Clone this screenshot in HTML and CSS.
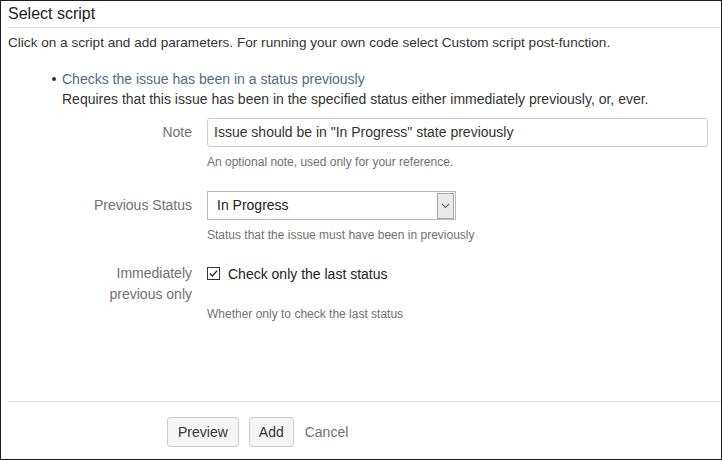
FILE: index.html
```html
<!DOCTYPE html>
<html>
<head>
<meta charset="utf-8">
<link rel="stylesheet" href="styles.css">
</head>
<body>
<div class="frame">
  <div class="title">Select script</div>
  <div class="desc">Click on a script and add parameters. For running your own code select Custom script post-function.</div>
  <ul class="scripts">
    <li><span class="link">Checks the issue has been in a status previously</span><br>Requires that this issue has been in the specified status either immediately previously, or, ever.</li>
  </ul>
  <div class="form">
    <div class="row row-note">
      <label class="label">Note</label>
      <div class="field">
        <div class="input">Issue should be in "In Progress" state previously</div>
        <div class="help">An optional note, used only for your reference.</div>
      </div>
    </div>
    <div class="row row-status">
      <label class="label">Previous Status</label>
      <div class="field">
        <div class="select">
          <span class="select-value">In Progress</span>
          <span class="select-arrow"><svg width="9" height="6" viewBox="0 0 9 6"><path d="M1 1 L4.5 4.5 L8 1" fill="none" stroke="#666" stroke-width="1.1"/></svg></span>
        </div>
        <div class="help">Status that the issue must have been in previously</div>
      </div>
    </div>
    <div class="row row-check">
      <label class="label">Immediately<br>previous only</label>
      <div class="field">
        <div class="check">
          <svg class="box" width="13" height="13" viewBox="0 0 13 13"><rect x="0.5" y="0.5" width="12" height="12" fill="#fff" stroke="#333"/><path d="M2.8 6.4 L5.3 9 L10.2 3.6" fill="none" stroke="#222" stroke-width="1.3"/></svg>
          <span>Check only the last status</span>
        </div>
        <div class="help help-check">Whether only to check the last status</div>
      </div>
    </div>
  </div>
  <div class="footer">
    <button class="btn">Preview</button>
    <button class="btn btn-add">Add</button>
    <span class="cancel">Cancel</span>
  </div>
</div>
</body>
</html>
```

FILE: styles.css
```css
html, body {
  margin: 0;
  padding: 0;
  background: #fff;
}
body {
  font-family: "Liberation Sans", Arial, sans-serif;
  color: #333;
  font-size: 14px;
}
.frame {
  width: 722px;
  height: 460px;
  box-sizing: border-box;
  border: 1px solid #1e1e1e;
  display: flex;
  flex-direction: column;
}
.title {
  margin-left: 7px;
  padding: 4px 0 4px 0;
  font-size: 16px;
  line-height: 18px;
  color: #222;
  border-bottom: 1px solid #ddd;
}
.desc {
  margin: 7px 0 0 7px;
  line-height: 16px;
  font-size: 13.6px;
}
.scripts {
  margin: 18px 0 0 0;
  padding: 0 0 0 61px;
  list-style: none;
}
.scripts li {
  line-height: 20px;
  position: relative;
}
.scripts li::before {
  content: "";
  position: absolute;
  left: -10px;
  top: 8px;
  width: 4px;
  height: 4px;
  border-radius: 50%;
  background: #333;
}
.link {
  color: #4f6a88;
}
.form {
  padding-right: 13px;
}
.row {
  display: grid;
  grid-template-columns: 191px 1fr;
  column-gap: 15px;
}
.row-note { margin-top: 9px; }
.row-status { margin-top: 21px; }
.row-check { margin-top: 20px; }
.label {
  text-align: right;
  color: #707070;
  font-size: 14px;
  line-height: 21px;
}
.row-note .label, .row-status .label {
  line-height: 28px;
}
.input {
  height: 29px;
  box-sizing: border-box;
  border: 1px solid #ccc;
  border-radius: 3px;
  padding: 0 6px;
  line-height: 27px;
  font-size: 14px;
  color: #333;
}
.help {
  margin-top: 8px;
  font-size: 12px;
  line-height: 15px;
  color: #707070;
}
.select {
  width: 249px;
  height: 29px;
  box-sizing: border-box;
  border: 1px solid #bbb;
  display: flex;
  align-items: stretch;
}
.select-value {
  flex: 1;
  padding-left: 9px;
  line-height: 27px;
  font-size: 14px;
  color: #222;
}
.select-arrow {
  width: 15px;
  margin: 1px 1px 0 0;
  border: 1px solid #a8a8a8;
  background: #e9e9e9;
  display: flex;
  align-items: center;
  justify-content: center;
}
.check {
  display: flex;
  align-items: center;
  height: 21px;
  font-size: 14px;
  color: #222;
}
.check .box {
  margin-right: 8px;
  flex: none;
}
.help-check {
  margin-top: 23px;
}
.footer {
  margin-top: auto;
  margin-left: 7px;
  border-top: 1px solid #ddd;
  padding: 15px 0 12px 159px;
  display: flex;
  align-items: center;
}
.btn {
  font-family: "Liberation Sans", Arial, sans-serif;
  font-size: 14px;
  color: #333;
  height: 30px;
  box-sizing: border-box;
  background: #f4f5f4;
  border: 1px solid #ccc;
  border-radius: 3px;
  padding: 0 10px;
  margin-right: 10px;
}
.btn-add {
  padding: 0 9px;
}
.cancel {
  color: #707070;
  font-size: 14px;
  margin-left: 1px;
}
```
